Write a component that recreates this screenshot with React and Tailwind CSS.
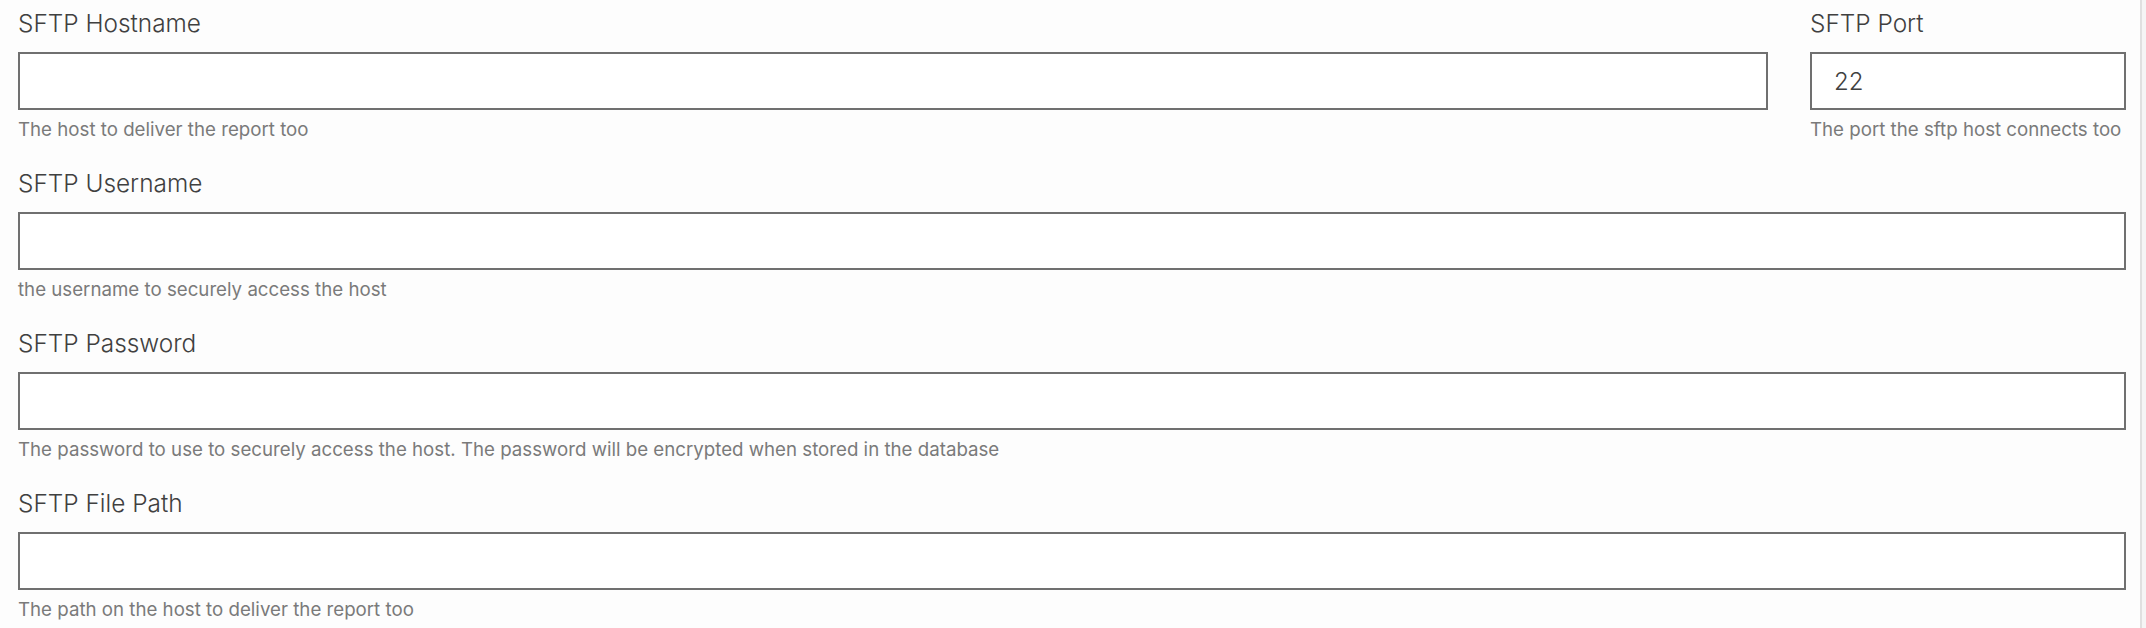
import React from "react";

const Field = ({ label, help, value, className = "" }) => (
  <div className={`flex flex-col pt-[5px] pb-[17px] ${className}`}>
    <label className="text-[24.4px] leading-[36px] font-[350] text-[#404040] mb-[11px]">{label}</label>
    <input
      type="text"
      defaultValue={value}
      className="h-[58px] w-full border-2 border-[#707070] bg-white px-[22px] text-[24px] font-[350] text-[#404040] outline-none"
    />
    <p className="mt-[6px] text-[18.7px] leading-[27px] text-[#7a7a7a] whitespace-nowrap">{help}</p>
  </div>
);

export default function App() {
  return (
    <div
      className="flex h-[628px] w-full overflow-hidden bg-[#fdfdfd]"
      style={{ fontFamily: "Inter, 'Noto Sans', sans-serif" }}
    >
      <div className="flex-1 pl-[18px] pr-[14px]">
        <div className="flex gap-[42px]">
          <Field className="flex-1" label="SFTP Hostname" help="The host to deliver the report too" />
          <Field className="w-[316px]" label="SFTP Port" value="22" help="The port the sftp host connects too" />
        </div>
        <Field label="SFTP Username" help="the username to securely access the host" />
        <Field
          label="SFTP Password"
          help="The password to use to securely access the host. The password will be encrypted when stored in the database"
        />
        <Field label="SFTP File Path" help="The path on the host to deliver the report too" />
      </div>
      {/* scrollbar track */}
      <div className="w-[6px] border-l-2 border-[#e0e0e0] bg-[#f5f5f5]" />
    </div>
  );
}
